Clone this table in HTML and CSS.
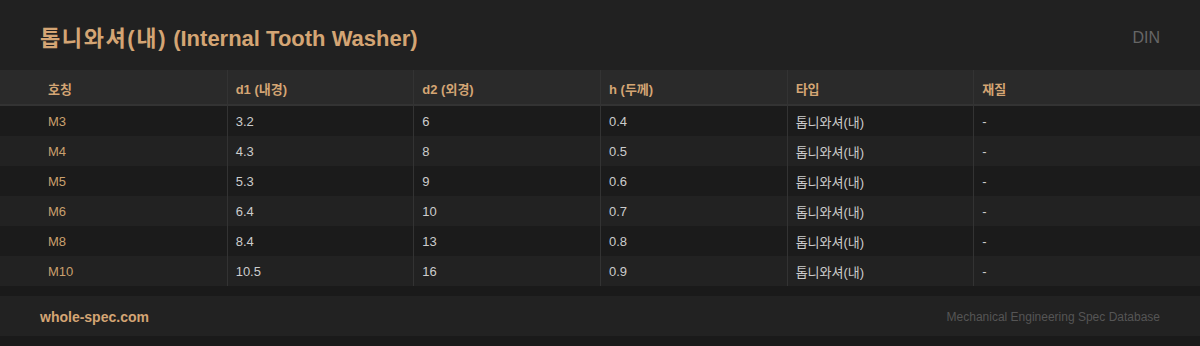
FILE: index.html
```html
<!DOCTYPE html>
<html lang="ko">
<head>
<meta charset="utf-8">
<link rel="stylesheet" href="styles.css">
</head>
<body>
<header class="top">
  <h1 class="title"><span class="ko">톱니와셔(내)</span> (Internal Tooth Washer)</h1>
  <span class="std">DIN</span>
</header>
<div class="table">
  <div class="row head">
    <div class="cell">호칭</div>
    <div class="cell">d1 (내경)</div>
    <div class="cell">d2 (외경)</div>
    <div class="cell">h (두께)</div>
    <div class="cell">타입</div>
    <div class="cell">재질</div>
  </div>
  <div class="row">
    <div class="cell name">M3</div><div class="cell">3.2</div><div class="cell">6</div><div class="cell">0.4</div><div class="cell">톱니와셔(내)</div><div class="cell">-</div>
  </div>
  <div class="row">
    <div class="cell name">M4</div><div class="cell">4.3</div><div class="cell">8</div><div class="cell">0.5</div><div class="cell">톱니와셔(내)</div><div class="cell">-</div>
  </div>
  <div class="row">
    <div class="cell name">M5</div><div class="cell">5.3</div><div class="cell">9</div><div class="cell">0.6</div><div class="cell">톱니와셔(내)</div><div class="cell">-</div>
  </div>
  <div class="row">
    <div class="cell name">M6</div><div class="cell">6.4</div><div class="cell">10</div><div class="cell">0.7</div><div class="cell">톱니와셔(내)</div><div class="cell">-</div>
  </div>
  <div class="row">
    <div class="cell name">M8</div><div class="cell">8.4</div><div class="cell">13</div><div class="cell">0.8</div><div class="cell">톱니와셔(내)</div><div class="cell">-</div>
  </div>
  <div class="row">
    <div class="cell name">M10</div><div class="cell">10.5</div><div class="cell">16</div><div class="cell">0.9</div><div class="cell">톱니와셔(내)</div><div class="cell">-</div>
  </div>
</div>
<footer class="foot">
  <span class="brand">whole-spec.com</span>
  <span class="tag">Mechanical Engineering Spec Database</span>
</footer>
</body>
</html>
```
FILE: styles.css
```css
html, body {
  margin: 0;
  padding: 0;
}
body {
  background: #1a1a1a;
  font-family: "Liberation Sans", Arial, "Noto Sans CJK KR", sans-serif;
  color: #cccccc;
  width: 1200px;
  height: 346px;
  overflow: hidden;
}
.top {
  height: 70px;
  background: #212121;
  display: flex;
  align-items: center;
  justify-content: space-between;
  padding: 0 40px;
  box-sizing: border-box;
}
.title {
  margin: 0;
  padding-top: 2px;
  font-size: 22px;
  font-weight: 700;
  color: #d4a574;
}
.title .ko {
  letter-spacing: 1.6px;
}
.std {
  font-size: 16px;
  color: #666666;
  padding-top: 6px;
}
.row {
  display: grid;
  grid-template-columns: repeat(6, 1fr);
  padding: 0 40px;
  height: 30px;
  background: #1b1b1b;
  font-size: 13px;
}
.row:nth-child(odd) {
  background: #222222;
}
.row.head {
  height: 36px;
  background: #2a2a2a;
  border-bottom: 2px solid #333333;
  box-sizing: border-box;
  color: #d4a574;
  font-weight: 700;
}
.cell {
  display: flex;
  align-items: center;
  padding: 0 8px;
  border-left: 1px solid #333333;
}
.cell:first-child {
  border-left: none;
}
.head .cell {
  padding-top: 2px;
}
.cell.name {
  color: #c9a06e;
}
.foot {
  margin-top: 10px;
  height: 40px;
  background: #222222;
  display: flex;
  align-items: center;
  justify-content: space-between;
  padding: 0 40px;
}
.brand {
  font-size: 14px;
  font-weight: 700;
  color: #d4a574;
  padding-top: 2px;
}
.tag {
  font-size: 12px;
  color: #555555;
  padding-top: 2px;
}
```
